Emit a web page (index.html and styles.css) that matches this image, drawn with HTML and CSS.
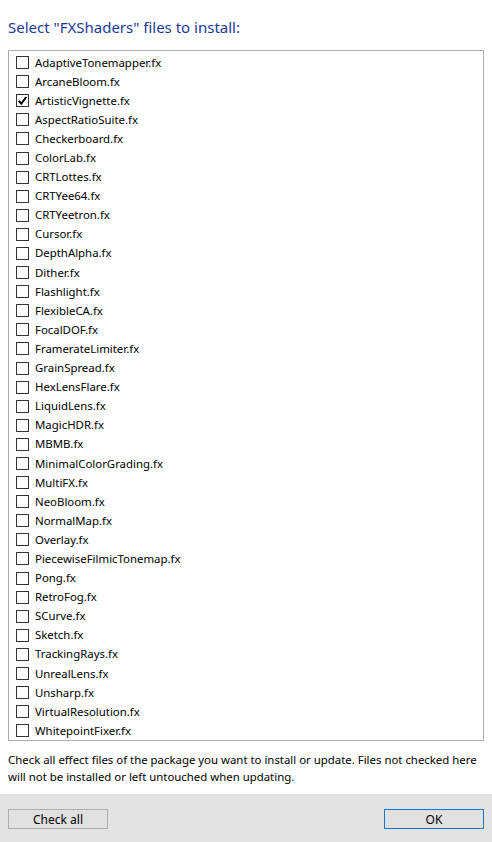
FILE: index.html
```html
<!DOCTYPE html>
<html>
<head>
<meta charset="utf-8">
<link rel="stylesheet" href="styles.css">
</head>
<body>
<div class="page">
  <div class="content">
    <h1 class="title">Select "FXShaders" files to install:</h1>
    <div class="listbox">
      <label class="item"><span class="box"></span><span class="name">AdaptiveTonemapper.fx</span></label>
      <label class="item"><span class="box"></span><span class="name">ArcaneBloom.fx</span></label>
      <label class="item"><span class="box checked"><svg viewBox="0 0 13 13" width="13" height="13"><path d="M2.8 6.8 L5.3 9.6 L10.3 3" fill="none" stroke="#000" stroke-width="2"/></svg></span><span class="name">ArtisticVignette.fx</span></label>
      <label class="item"><span class="box"></span><span class="name">AspectRatioSuite.fx</span></label>
      <label class="item"><span class="box"></span><span class="name">Checkerboard.fx</span></label>
      <label class="item"><span class="box"></span><span class="name">ColorLab.fx</span></label>
      <label class="item"><span class="box"></span><span class="name">CRTLottes.fx</span></label>
      <label class="item"><span class="box"></span><span class="name">CRTYee64.fx</span></label>
      <label class="item"><span class="box"></span><span class="name">CRTYeetron.fx</span></label>
      <label class="item"><span class="box"></span><span class="name">Cursor.fx</span></label>
      <label class="item"><span class="box"></span><span class="name">DepthAlpha.fx</span></label>
      <label class="item"><span class="box"></span><span class="name">Dither.fx</span></label>
      <label class="item"><span class="box"></span><span class="name">Flashlight.fx</span></label>
      <label class="item"><span class="box"></span><span class="name">FlexibleCA.fx</span></label>
      <label class="item"><span class="box"></span><span class="name">FocalDOF.fx</span></label>
      <label class="item"><span class="box"></span><span class="name">FramerateLimiter.fx</span></label>
      <label class="item"><span class="box"></span><span class="name">GrainSpread.fx</span></label>
      <label class="item"><span class="box"></span><span class="name">HexLensFlare.fx</span></label>
      <label class="item"><span class="box"></span><span class="name">LiquidLens.fx</span></label>
      <label class="item"><span class="box"></span><span class="name">MagicHDR.fx</span></label>
      <label class="item"><span class="box"></span><span class="name">MBMB.fx</span></label>
      <label class="item"><span class="box"></span><span class="name">MinimalColorGrading.fx</span></label>
      <label class="item"><span class="box"></span><span class="name">MultiFX.fx</span></label>
      <label class="item"><span class="box"></span><span class="name">NeoBloom.fx</span></label>
      <label class="item"><span class="box"></span><span class="name">NormalMap.fx</span></label>
      <label class="item"><span class="box"></span><span class="name">Overlay.fx</span></label>
      <label class="item"><span class="box"></span><span class="name">PiecewiseFilmicTonemap.fx</span></label>
      <label class="item"><span class="box"></span><span class="name">Pong.fx</span></label>
      <label class="item"><span class="box"></span><span class="name">RetroFog.fx</span></label>
      <label class="item"><span class="box"></span><span class="name">SCurve.fx</span></label>
      <label class="item"><span class="box"></span><span class="name">Sketch.fx</span></label>
      <label class="item"><span class="box"></span><span class="name">TrackingRays.fx</span></label>
      <label class="item"><span class="box"></span><span class="name">UnrealLens.fx</span></label>
      <label class="item"><span class="box"></span><span class="name">Unsharp.fx</span></label>
      <label class="item"><span class="box"></span><span class="name">VirtualResolution.fx</span></label>
      <label class="item"><span class="box"></span><span class="name">WhitepointFixer.fx</span></label>
    </div>
    <p class="note">Check all effect files of the package you want to install or update. Files not checked here will not be installed or left untouched when updating.</p>
  </div>
  <div class="footer">
    <button class="btn">Check all</button>
    <button class="btn primary">OK</button>
  </div>
</div>
</body>
</html>
```
FILE: styles.css
```css
html, body {
  margin: 0;
  padding: 0;
  background: #fff;
}
body {
  font-family: "Noto Sans", "Open Sans", sans-serif;
  font-size: 11.4px;
  color: #000;
}
.page {
  width: 492px;
  height: 842px;
  display: flex;
  flex-direction: column;
}
.content {
  flex: 1;
  padding: 0 8px;
}
.title {
  margin: 0;
  padding-top: 17px;
  height: 50px;
  box-sizing: border-box;
  font-size: 15px;
  font-weight: normal;
  color: #1c3a9c;
  line-height: 20px;
}
.listbox {
  border: 1px solid #acacac;
  width: 476px;
  height: 691px;
  box-sizing: border-box;
  padding: 2px 0 0 7px;
}
.item {
  display: flex;
  align-items: center;
  height: 19.1px;
}
.box {
  width: 13px;
  height: 13px;
  box-sizing: border-box;
  border: 1px solid #333;
  background: #fff;
  margin-right: 6px;
  position: relative;
  flex: none;
}
.box svg {
  position: absolute;
  left: -1px;
  top: -1px;
}
.name {
  line-height: 16px;
  white-space: nowrap;
}
.note {
  margin: 10px 0 0 0;
  line-height: 17px;
}
.footer {
  height: 48px;
  background: #e3e3e3;
  display: flex;
  justify-content: space-between;
  padding: 15px 8px 0 8px;
  box-sizing: border-box;
}
.btn {
  width: 100px;
  height: 20px;
  background: #e1e1e1;
  border: 1px solid #adadad;
  font-family: inherit;
  font-size: 12px;
  color: #000;
  padding: 0;
  line-height: 17px;
}
.btn.primary {
  border-color: #0078d7;
}
```
